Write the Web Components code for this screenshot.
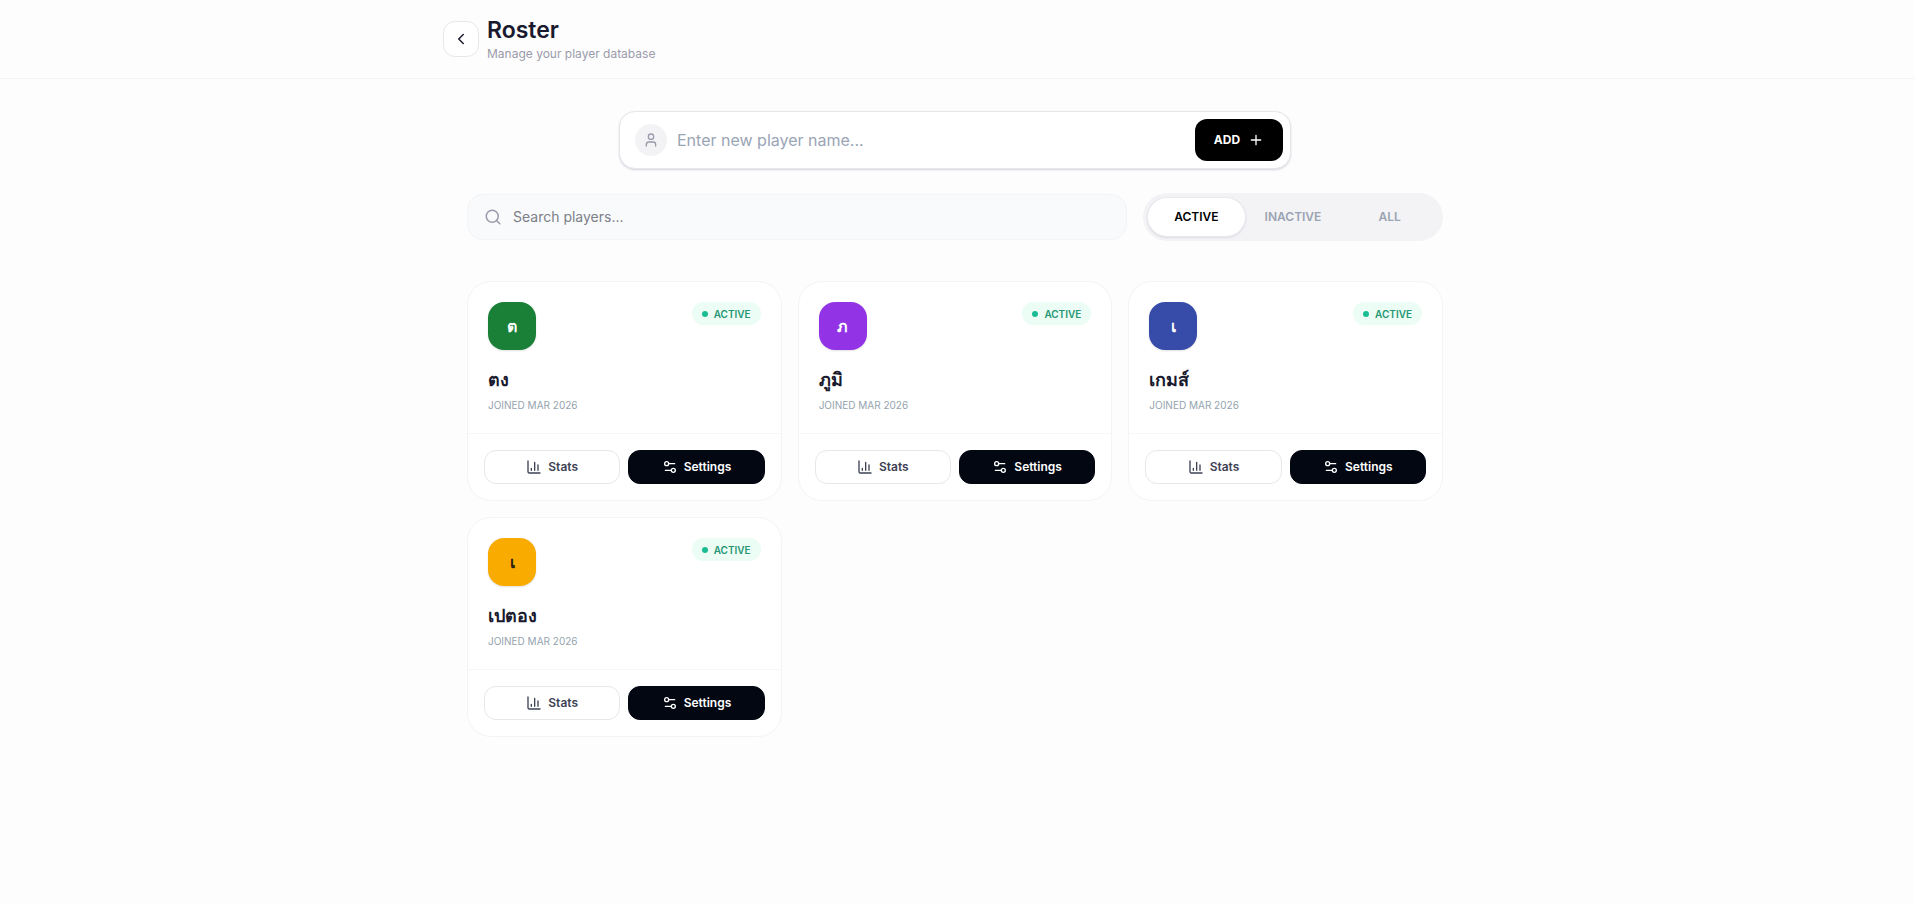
<!DOCTYPE html>
<html lang="en">
<head>
<meta charset="utf-8">
<meta name="viewport" content="width=device-width, initial-scale=1">
<title>Roster</title>
<style>
  body {
    margin: 0;
    min-height: 100vh;
    background: #fdfdfd;
    color: #1a1a2e;
    font-family: Inter, "Noto Sans", sans-serif;
    --line: #f3f4f6;
    --line-strong: #e5e7eb;
    --muted: #9ca3af;
    --edge: 4px;
  }
</style>
</head>
<body>
<roster-page></roster-page>
<script>
const define = (name, html, setup) => {
  const template = document.createElement('template');
  template.innerHTML = html;
  customElements.define(name, class extends HTMLElement {
    connectedCallback() {
      if (this.shadowRoot) return;
      const root = this.attachShadow({ mode: 'open' });
      root.append(template.content.cloneNode(true));
      if (setup) setup(this, root);
    }
  });
};

const ICONS = {
  back: '<path d="m15 18-6-6 6-6"/>',
  user: '<path d="M19 21v-2a4 4 0 0 0-4-4H9a4 4 0 0 0-4 4v2"/><circle cx="12" cy="7" r="4"/>',
  plus: '<path d="M5 12h14M12 5v14"/>',
  search: '<circle cx="11" cy="11" r="8"/><path d="m21 21-4.3-4.3"/>',
  chart: '<path d="M3 3v16a2 2 0 0 0 2 2h16"/><path d="M18 17V9M13 17V5M8 17v-3"/>',
  sliders: '<path d="M14 17H5M19 7h-9"/><circle cx="17" cy="17" r="3"/><circle cx="7" cy="7" r="3"/>'
};

define('ui-icon', `
  <style>
    :host { display: block; flex: none; width: 16px; height: 16px; }
    :host([large]) { width: 18px; height: 18px; }
    svg { display: block; width: 100%; height: 100%; fill: none; stroke: currentColor;
          stroke-width: 2; stroke-linecap: round; stroke-linejoin: round; }
  </style>
  <svg viewBox="0 0 24 24" aria-hidden="true"></svg>`,
  (host, root) => { root.querySelector('svg').innerHTML = ICONS[host.getAttribute('name')]; });

define('page-header', `
  <style>
    :host { display: block; border-bottom: 1px solid var(--line); padding-right: var(--edge); }
    header { display: flex; align-items: center; gap: 8px; max-width: 1024px; margin: 0 auto; padding: 16px 0; }
    button { display: grid; place-items: center; width: 36px; height: 36px; padding: 0; border: 1px solid var(--line-strong);
             border-radius: 12px; background: #fff; color: #1a1a2e; }
    h1 { margin: 0 0 2px; font-size: 23px; line-height: 28px; font-weight: 600; }
    p { margin: 0; font-size: 12px; line-height: 16px; color: #9b9bab; }
  </style>
  <header>
    <button type="button" aria-label="Back"><ui-icon name="back" large></ui-icon></button>
    <div><h1><slot></slot></h1><p><slot name="subtitle"></slot></p></div>
  </header>`);

define('add-player', `
  <style>
    :host { display: block; width: 100%; max-width: 672px; margin: 0 auto; }
    form { display: flex; align-items: center; box-sizing: border-box; height: 58px; padding: 0 7px 0 15px;
           border: 1px solid var(--line-strong); border-radius: 16px; background: #fff;
           box-shadow: 0 1px 2px #d4d4de; }
    label { display: grid; place-items: center; flex: none; width: 32px; height: 32px; border-radius: 50%;
            background: #f3f3f6; color: #9b9bab; }
    input { flex: 1; min-width: 0; padding: 0 10px; border: 0; outline: 0; background: none; font: 400 16px/24px Inter, sans-serif; color: #1a1a2e; }
    input::placeholder { color: #9aa5b5; opacity: 1; }
    button { display: flex; align-items: center; justify-content: center; gap: 8px; width: 88px; height: 42px; padding: 0;
             border: 0; border-radius: 12px; background: #000; color: #fff; font: 700 12px/16px Inter, sans-serif; }
  </style>
  <form>
    <label for="name" aria-label="Player name"><ui-icon name="user"></ui-icon></label>
    <input id="name" type="text" placeholder="Enter new player name...">
    <button type="button">ADD <ui-icon name="plus"></ui-icon></button>
  </form>`);

define('player-search', `
  <style>
    :host { display: block; flex: 1; min-width: 0; }
    div { display: flex; align-items: center; gap: 11px; box-sizing: border-box; height: 46px; padding: 0 16px;
          border: 1px solid var(--line); border-radius: 16px; background: #f9fafc; }
    label { color: #9b9bab; }
    input { flex: 1; min-width: 0; padding: 0; border: 0; outline: 0; background: none; font: 400 14px/20px Inter, sans-serif; color: #1a1a2e; }
    input::placeholder { color: #7c7f86; opacity: 1; }
  </style>
  <div>
    <label for="q" aria-label="Search players"><ui-icon name="search" large></ui-icon></label>
    <input id="q" type="text" placeholder="Search players...">
  </div>`);

define('status-filter', `
  <style>
    :host { display: grid; grid-template-columns: repeat(3, 1fr); box-sizing: border-box; width: 300px; height: 48px;
            padding: 5px; border-radius: 24px; background: #f3f3f6; }
    button { padding: 0; border: 0; border-radius: 19px; background: none; color: #9aa3b2; font: 600 12px/16px Inter, sans-serif; }
    button[aria-pressed="true"] { background: #fff; color: #000; box-shadow: 0 0 0 1px #e8e8ee, 0 1px 2px 1px #dcdce4; }
  </style>
  <button type="button" aria-pressed="true">ACTIVE</button>
  <button type="button" aria-pressed="false">INACTIVE</button>
  <button type="button" aria-pressed="false">ALL</button>`,
  (host, root) => {
    const buttons = [...root.querySelectorAll('button')];
    buttons.forEach(b => b.addEventListener('click', () =>
      buttons.forEach(o => o.setAttribute('aria-pressed', String(o === b)))));
  });

define('status-badge', `
  <style>
    :host { display: flex; align-items: center; gap: 6px; height: 23px; padding: 0 10px; border-radius: 12px;
            background: #ecfdf5; color: #259673; font-size: 10px; line-height: 16px; font-weight: 600; }
    i { width: 6px; height: 6px; border-radius: 50%; background: #1abc94; }
  </style>
  <i></i><slot></slot>`);

define('player-card', `
  <style>
    :host { display: block; border: 1px solid var(--line); border-radius: 24px; background: #fff; }
    .body { padding: 20px; }
    .top { display: flex; align-items: flex-start; justify-content: space-between; }
    .avatar { display: grid; place-items: center; width: 48px; height: 48px; border-radius: 16px; background: var(--tone);
              color: var(--ink, #fff); box-shadow: 0 1px 2px #0000001f; font-size: 16px; line-height: 24px; font-weight: 700; }
    h2 { margin: 16px 0 4px; font-size: 18px; line-height: 28px; font-weight: 600; color: #1a1a2e; }
    p { margin: 0; font-size: 10px; line-height: 15px; color: #94a3ae; }
    .actions { display: grid; grid-template-columns: 1fr 1fr; gap: 8px; padding: 16px; border-top: 1px solid #f6f7f8; }
    button { display: flex; align-items: center; justify-content: center; gap: 6px; height: 34px; padding: 0;
             border: 1px solid var(--line-strong); border-radius: 12px; background: #fff; color: #3d4255;
             font: 600 12px/16px Inter, sans-serif; }
    .dark { border-color: #030712; background: #030712; color: #fff; }
  </style>
  <div class="body">
    <div class="top"><span class="avatar"></span><status-badge>ACTIVE</status-badge></div>
    <h2><slot></slot></h2>
    <p>JOINED MAR 2026</p>
  </div>
  <div class="actions">
    <button type="button"><ui-icon name="chart"></ui-icon>Stats</button>
    <button type="button" class="dark"><ui-icon name="sliders"></ui-icon>Settings</button>
  </div>`,
  (host, root) => { root.querySelector('.avatar').textContent = host.getAttribute('initial'); });

define('roster-page', `
  <style>
    :host { display: block; }
    main { padding: 32px calc(24px + var(--edge)) 32px 24px; }
    .filters, .cards { max-width: 976px; margin: 0 auto; }
    .filters { display: flex; align-items: center; gap: 16px; margin-top: 24px; margin-bottom: 40px; }
    .cards { display: grid; grid-template-columns: repeat(3, minmax(0, 1fr)); gap: 16px; }
    .green { --tone: #1a8038; }
    .purple { --tone: #9333e6; }
    .blue { --tone: #374ba8; }
    .amber { --tone: #f9ab00; --ink: #2a1e12; }
    @media (max-width: 900px) {
      .filters { flex-direction: column; align-items: stretch; }
      .cards { grid-template-columns: repeat(auto-fill, minmax(260px, 1fr)); }
    }
  </style>
  <page-header>Roster<span slot="subtitle">Manage your player database</span></page-header>
  <main>
    <add-player></add-player>
    <div class="filters"><player-search></player-search><status-filter></status-filter></div>
    <section class="cards">
      <player-card class="green" initial="ต">ตง</player-card>
      <player-card class="purple" initial="ภ">ภูมิ</player-card>
      <player-card class="blue" initial="เ">เกมส์</player-card>
      <player-card class="amber" initial="เ">เปตอง</player-card>
    </section>
  </main>`);
</script>
</body>
</html>
